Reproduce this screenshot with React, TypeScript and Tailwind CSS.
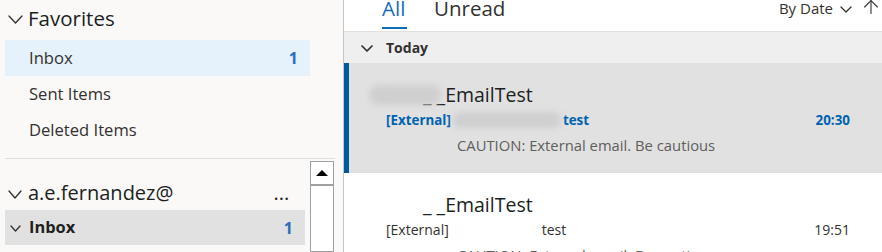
import { ArrowUp } from 'lucide-react';

function Chevron({ w, h, stroke = 1.3, className = '' }: { w: number; h: number; stroke?: number; className?: string }) {
  return (
    <svg width={w + 2} height={h + 2} viewBox={`-1 -1 ${w + 2} ${h + 2}`} className={className} fill="none">
      <polyline points={`0,0 ${w / 2},${h} ${w},0`} stroke="currentColor" strokeWidth={stroke} strokeLinecap="round" strokeLinejoin="round" />
    </svg>
  );
}

function FolderRow({ label, count, active }: { label: string; count?: number; active?: boolean }) {
  return (
    <div
      className={`mx-[5px] flex h-[36px] w-[305px] items-center justify-between pl-[24px] pr-[12px] text-[16.6px] text-[#323130] ${
        active ? 'bg-[#e5f1fb]' : ''
      }`}
    >
      <span>{label}</span>
      {count !== undefined && <span className="text-[16px] font-bold text-[#2a6ebb]">{count}</span>}
    </div>
  );
}

function Blob({ w, h, className = '' }: { w: number; h: number; className?: string }) {
  return (
    <span
      className={`inline-block rounded-full bg-[#cfcfcf] blur-[3px] align-middle ${className}`}
      style={{ width: w, height: h }}
    />
  );
}

function MailItem({ selected, time }: { selected?: boolean; time: string }) {
  return (
    <div className={`relative h-[110px] shrink-0 ${selected ? 'bg-[#e1e1e1]' : 'bg-white'}`}>
      {selected && <div className="absolute left-0 top-0 h-full w-[5px] bg-[#005a9e]" />}
      <div className="pl-[25px] pr-[32px] pt-[20px]">
        <div className="flex h-[24px] items-center text-[19.5px] leading-[24px] text-[#201f1e]">
          {selected ? <Blob w={72} h={20} className="-mr-[18px]" /> : <span className="inline-block w-[54px]" />}
          <span className="whitespace-pre">_ _EmailTest</span>
        </div>
        <div
          className={`mt-[3px] flex h-[20px] items-center justify-between pl-[17px] leading-[20px] ${
            selected ? 'text-[13.4px] font-bold text-[#0063b1]' : 'text-[14px] text-[#323130]'
          }`}
        >
          <span className="flex items-center whitespace-pre">
            [External]
            {selected ? <Blob w={108} h={16} className="mx-[2px]" /> : <span className="inline-block w-[93px]" />}
            test
          </span>
          <span>{time}</span>
        </div>
        <div className="mt-[5px] h-[20px] pl-[88px] text-[14.8px] leading-[20px] text-[#605e5c]">
          CAUTION: External email. Be cautious
        </div>
      </div>
    </div>
  );
}

export default function App() {
  return (
    <div className="flex h-[252px] w-[882px] overflow-hidden bg-white font-['Segoe_UI','Open_Sans',sans-serif]">
      <aside className="flex w-[344px] shrink-0 flex-col border-r border-[#c8c6c4] bg-[#faf9f8]">
        <div className="flex h-[40px] items-center pb-[4px] pl-[8px] text-[20.5px] text-[#201f1e]">
          <Chevron w={13} h={7} className="mr-[5px] mt-[2px] text-[#323130]" />
          Favorites
        </div>
        <FolderRow label="Inbox" count={1} active />
        <FolderRow label="Sent Items" />
        <FolderRow label="Deleted Items" />
        <div className="ml-[5px] mt-[10px] h-px w-[330px] bg-[#e1dfdd]" />
        <div className="flex flex-1 pt-[2px]">
          <div className="flex w-[310px] flex-col">
            <div className="flex h-[49px] items-end pb-[2px] pl-[8px] text-[20px] text-[#201f1e]">
              <Chevron w={12} h={7} className="mb-[9px] mr-[6px] text-[#323130]" />
              <span>a.e.fernandez@</span>
              <span className="inline-block w-[100px]" />
              <span>...</span>
            </div>
            <div className="mx-[5px] flex h-[35px] items-center justify-between bg-[#e1e1e1] pl-[5px] pr-[12px] text-[16.4px]">
              <span className="flex items-center font-bold text-[#201f1e]">
                <Chevron w={9} h={5} className="mr-[8px] mt-[2px] text-[#323130]" />
                Inbox
              </span>
              <span className="text-[16px] font-bold text-[#2a6ebb]">1</span>
            </div>
          </div>
          <div className="flex w-[24px] flex-col border border-[#a0a0a0] bg-white">
            <div className="flex h-[24px] items-center justify-center border-b-2 border-[#a0a0a0]">
              <span className="h-0 w-0 border-x-[6px] border-b-[6px] border-x-transparent border-b-black" />
            </div>
          </div>
        </div>
      </aside>

      <main className="flex min-w-0 flex-1 flex-col">
        <div className="flex h-[32px] shrink-0 items-start justify-between border-b border-[#e1dfdd] pl-[38px] pr-0">
          <div className="flex gap-[27px] text-[20.5px] leading-[20px]">
            <span className="-mt-[2px] flex flex-col text-[#0f6cbd]">
              All
              <span className="mt-[9px] h-[2px] w-[25px] bg-[#0f6cbd]" />
            </span>
            <span className="-mt-[2px] text-[#323130]">Unread</span>
          </div>
          <div className="-mt-[2px] flex items-center text-[15px] leading-[20px] text-[#323130]">
            <span>By Date</span>
            <Chevron w={10} h={5} className="ml-[7px] mt-[2px]" />
            <ArrowUp size={22} strokeWidth={1.2} className="ml-[8px] -mt-[2px]" />
          </div>
        </div>
        <div className="flex h-[31px] shrink-0 items-center bg-[#efefef] pl-[17px] text-[14px] font-bold text-[#323130]">
          <Chevron w={10} h={5} stroke={1.7} className="mr-[13px] mt-[1px] text-[#323130]" />
          Today
        </div>
        <MailItem selected time="20:30" />
        <MailItem time="19:51" />
      </main>
    </div>
  );
}
